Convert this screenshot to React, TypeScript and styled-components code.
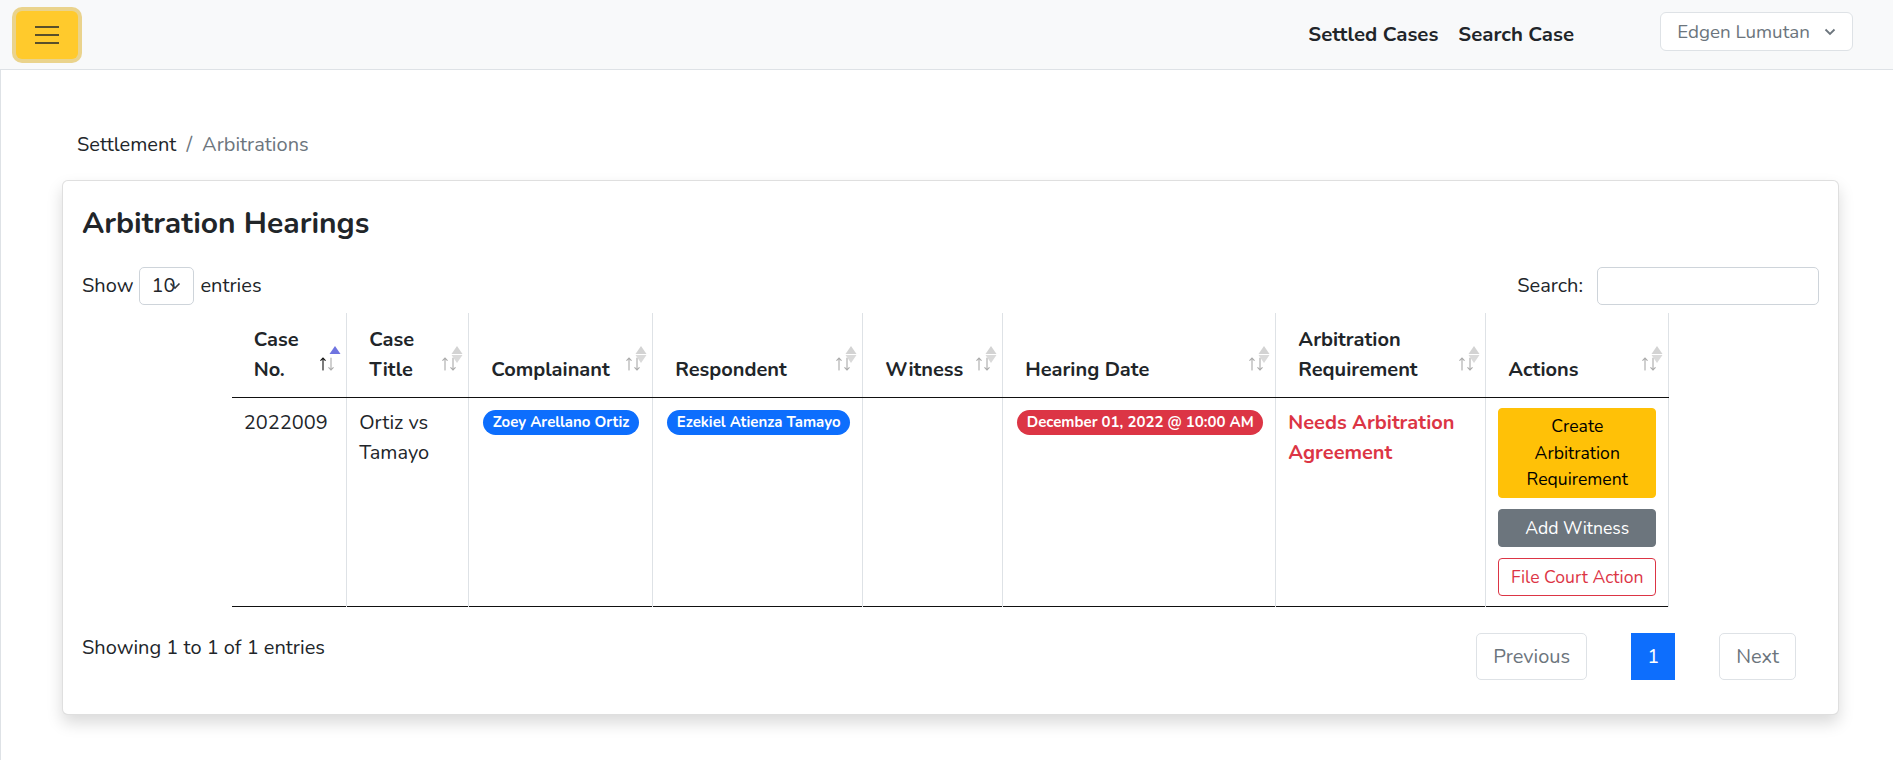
import styled, { createGlobalStyle } from "styled-components";

const GlobalStyle = createGlobalStyle`
    * { box-sizing: border-box; }
    body {
        margin: 0;
        background: #fff;
        color: #212529;
        font-family: Nunito, Lato, "Noto Sans", sans-serif;
        font-size: 20px;
        line-height: 1.5;
    }
`;

const Navbar = styled.nav`
    height: 70px;
    background: #f8f9fa;
    border-bottom: 1px solid #dee2e6;
    display: flex;
    align-items: center;
    padding: 0 40px 0 16px;
`;

const Toggler = styled.button`
    width: 62px;
    height: 48px;
    border: none;
    border-radius: 6px;
    background: #ffca2c;
    box-shadow: 0 0 0 4px rgba(217, 164, 6, 0.45);
    display: flex;
    align-items: center;
    justify-content: center;
    padding: 0;
`;

const NavLinks = styled.div`
    margin-left: auto;
    display: flex;
    gap: 20px;
    align-items: center;
`;

const NavLink = styled.a`
    font-weight: 700;
    font-size: 20.4px;
    color: #212529;
    text-decoration: none;
`;

const UserButton = styled.button`
    margin-left: 86px;
    margin-bottom: 6px;
    width: 193px;
    height: 39px;
    background: #fff;
    border: 1px solid #dee2e6;
    border-radius: 6px;
    color: #6c757d;
    font-family: inherit;
    font-size: 18.8px;
    display: flex;
    align-items: center;
    justify-content: center;
    gap: 14px;
`;

const Main = styled.main`
    border-left: 1px solid #dee2e6;
    padding: 0 54px 45px 61px;
`;

const Breadcrumb = styled.div`
    padding: 60px 0 0 15px;
    display: flex;
    gap: 10px;
`;

const Crumb = styled.span<{ $active?: boolean }>`
    color: ${(p) => (p.$active ? "#6c757d" : "#212529")};
`;

const Card = styled.section`
    margin-top: 20px;
    background: #fff;
    border: 1px solid rgba(0, 0, 0, 0.125);
    border-radius: 6px;
    box-shadow: 0 8px 16px rgba(0, 0, 0, 0.15);
    padding: 25px 19px 34px;
`;

const Title = styled.h4`
    margin: 0;
    font-size: 30px;
    font-weight: 700;
    line-height: 1.2;
`;

const Controls = styled.div`
    margin-top: 25px;
    display: flex;
    justify-content: space-between;
    align-items: center;
    height: 38px;
`;

const Label = styled.label`
    display: flex;
    align-items: center;
    gap: 6px;
`;

const FakeSelect = styled.div`
    width: 55px;
    height: 38px;
    border: 1px solid #ced4da;
    border-radius: 5px;
    display: flex;
    align-items: center;
    padding-left: 11px;
`;

const SearchInput = styled.input`
    width: 222px;
    height: 38px;
    border: 1px solid #ced4da;
    border-radius: 5px;
    margin-left: 8px;
`;

const Table = styled.table`
    margin: 8px auto 0;
    width: 1437px;
    table-layout: fixed;
    border-collapse: collapse;
    border-bottom: 1px solid #111;
`;

const Th = styled.th`
    position: relative;
    text-align: left;
    vertical-align: bottom;
    font-weight: 700;
    padding: 12px 22px;
    line-height: 1.5;
    border-right: 1px solid #dee2e6;
    border-bottom: 1px solid #111;
`;

const Td = styled.td`
    vertical-align: top;
    padding: 9.6px 12px;
    border-right: 1px solid #dee2e6;
`;

const Badge = styled.span<{ $tone: "primary" | "danger" }>`
    display: inline-block;
    margin-left: 2px;
    padding: 5px 9.5px;
    font-size: 15px;
    font-weight: 700;
    line-height: 1;
    color: #fff;
    border-radius: 50rem;
    background: ${(p) => (p.$tone === "primary" ? "#0d6efd" : "#dc3545")};
    vertical-align: 2px;
`;

const Requirement = styled.div`
    color: #dc3545;
    font-weight: 700;
`;

const Actions = styled.div`
    display: flex;
    flex-direction: column;
    gap: 11px;
`;

const ActionButton = styled.button<{ $variant: "warning" | "secondary" | "outline" }>`
    width: 100%;
    font-family: inherit;
    font-size: 17.6px;
    line-height: 1.5;
    padding: 4.8px 9.6px;
    border-radius: 4px;
    border: 1px solid
        ${(p) =>
            p.$variant === "warning"
                ? "#ffc107"
                : p.$variant === "secondary"
                ? "#6c757d"
                : "#dc3545"};
    background: ${(p) =>
        p.$variant === "warning"
            ? "#ffc107"
            : p.$variant === "secondary"
            ? "#6c757d"
            : "#fff"};
    color: ${(p) =>
        p.$variant === "warning"
            ? "#000"
            : p.$variant === "secondary"
            ? "#fff"
            : "#dc3545"};
`;

const SortArrows = styled.svg`
    position: absolute;
    right: 9px;
    bottom: 26px;
`;

const SortTriangles = styled.svg`
    position: absolute;
    right: 5px;
    bottom: 34px;
`;

const Footer = styled.div`
    margin-top: 26px;
    display: flex;
    justify-content: space-between;
    align-items: flex-start;
`;

const Pagination = styled.div`
    display: flex;
    gap: 44px;
    margin-right: 23px;
`;

const PageButton = styled.button<{ $current?: boolean }>`
    height: 47px;
    padding: 0 ${(p) => (p.$current ? "15px" : "16px")};
    font-family: inherit;
    font-size: 20px;
    border: 1px solid ${(p) => (p.$current ? "#0d6efd" : "#dee2e6")};
    border-radius: ${(p) => (p.$current ? "0" : "5px")};
    background: ${(p) => (p.$current ? "#0d6efd" : "#fff")};
    color: ${(p) => (p.$current ? "#fff" : "#6c757d")};
`;

const SortMark = ({ active = false }: { active?: boolean }) => (
    <>
        <SortArrows width="18" height="14" viewBox="0 0 18 14">
            <g fill="none" strokeWidth="1.1" strokeLinecap="round">
                <path d="M4 13V1M1.8 3.4L4 1l2.2 2.4" stroke={active ? "#111" : "#aaa"} />
                <path d="M12 1v12M9.8 10.6L12 13l2.2-2.4" stroke="#aaa" />
            </g>
        </SortArrows>
        <SortTriangles width="12" height="17" viewBox="0 0 12 17">
            <path d="M6 0l5.5 8H0.5z" fill={active ? "#6f74e0" : "#d3d3d3"} />
            {!active && <path d="M0.5 9h11L6 17z" fill="#dadada" />}
        </SortTriangles>
    </>
);

const columns: { label: string; width: number; active?: boolean }[] = [
    { label: "Case No.", width: 115, active: true },
    { label: "Case Title", width: 122 },
    { label: "Complainant", width: 184 },
    { label: "Respondent", width: 210 },
    { label: "Witness", width: 140 },
    { label: "Hearing Date", width: 273 },
    { label: "Arbitration Requirement", width: 210 },
    { label: "Actions", width: 183 },
];

export default function App() {
    return (
        <>
            <GlobalStyle />
            <Navbar>
                <Toggler aria-label="menu">
                    <svg width="26" height="22" viewBox="0 0 26 22">
                        <path
                            d="M1 3h24M1 11h24M1 19h24"
                            stroke="rgba(33,37,41,0.75)"
                            strokeWidth="2"
                        />
                    </svg>
                </Toggler>
                <NavLinks>
                    <NavLink href="#">Settled Cases</NavLink>
                    <NavLink href="#">Search Case</NavLink>
                </NavLinks>
                <UserButton>
                    Edgen Lumutan
                    <svg width="12" height="8" viewBox="0 0 12 8">
                        <path d="M1.5 1.5L6 6l4.5-4.5" fill="none" stroke="#6c757d" strokeWidth="1.8" />
                    </svg>
                </UserButton>
            </Navbar>
            <Main>
                <Breadcrumb>
                    <Crumb>Settlement</Crumb>
                    <Crumb $active>/</Crumb>
                    <Crumb $active>Arbitrations</Crumb>
                </Breadcrumb>
                <Card>
                    <Title>Arbitration Hearings</Title>
                    <Controls>
                        <Label>
                            Show
                            <FakeSelect>
                                10
                                <svg width="12" height="8" viewBox="0 0 12 8" style={{ marginLeft: -6 }}>
                                    <path d="M1.5 1.5L6 6l4.5-4.5" fill="none" stroke="#343a40" strokeWidth="1.6" />
                                </svg>
                            </FakeSelect>
                            entries
                        </Label>
                        <Label>
                            Search:
                            <SearchInput type="search" />
                        </Label>
                    </Controls>
                    <Table>
                        <colgroup>
                            {columns.map((c) => (
                                <col key={c.label} style={{ width: c.width }} />
                            ))}
                        </colgroup>
                        <thead>
                            <tr>
                                {columns.map((c) => (
                                    <Th key={c.label}>
                                        {c.label}
                                        <SortMark active={c.active} />
                                    </Th>
                                ))}
                            </tr>
                        </thead>
                        <tbody>
                            <tr>
                                <Td>2022009</Td>
                                <Td>Ortiz vs Tamayo</Td>
                                <Td>
                                    <Badge $tone="primary">Zoey Arellano Ortiz</Badge>
                                </Td>
                                <Td>
                                    <Badge $tone="primary">Ezekiel Atienza Tamayo</Badge>
                                </Td>
                                <Td></Td>
                                <Td>
                                    <Badge $tone="danger">December 01, 2022 @ 10:00 AM</Badge>
                                </Td>
                                <Td>
                                    <Requirement>Needs Arbitration Agreement</Requirement>
                                </Td>
                                <Td>
                                    <Actions>
                                        <ActionButton $variant="warning">
                                            Create Arbitration Requirement
                                        </ActionButton>
                                        <ActionButton $variant="secondary">Add Witness</ActionButton>
                                        <ActionButton $variant="outline">File Court Action</ActionButton>
                                    </Actions>
                                </Td>
                            </tr>
                        </tbody>
                    </Table>
                    <Footer>
                        <div>Showing 1 to 1 of 1 entries</div>
                        <Pagination>
                            <PageButton>Previous</PageButton>
                            <PageButton $current>1</PageButton>
                            <PageButton>Next</PageButton>
                        </Pagination>
                    </Footer>
                </Card>
            </Main>
        </>
    );
}
